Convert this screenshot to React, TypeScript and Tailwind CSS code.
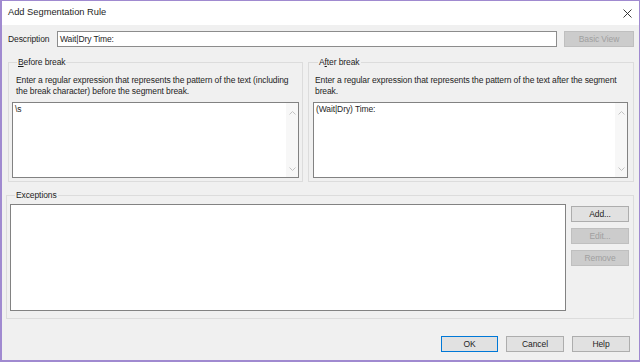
import React from "react";

const font = { fontFamily: '"Liberation Sans", Arial, sans-serif' };

function Chevron({ up }: { up?: boolean }) {
  return (
    <svg width="7" height="4" viewBox="0 0 7 4" className="block">
      <path
        d={up ? "M0.5 3.5 L3.5 0.5 L6.5 3.5" : "M0.5 0.5 L3.5 3.5 L6.5 0.5"}
        fill="none"
        stroke="#c2c2c2"
        strokeWidth="1"
      />
    </svg>
  );
}

function TextArea({ value }: { value: string }) {
  return (
    <div className="flex h-[76px] border border-[#828282] bg-white">
      <div className="flex-1 pl-[2px] pt-[1px] leading-[11px]">{value}</div>
      <div className="flex w-[12px] flex-col items-center justify-between bg-[#f7f7f7] pt-[8px] pb-[6px]">
        <Chevron up />
        <Chevron />
      </div>
    </div>
  );
}

function Btn({
  children,
  disabled,
  primary,
  className = "",
}: {
  children: React.ReactNode;
  disabled?: boolean;
  primary?: boolean;
  className?: string;
}) {
  const cls = disabled
    ? "bg-[#cccccc] border-[#bfbfbf] text-[#a0a0a0]"
    : primary
    ? "bg-[#e1e1e1] border-[#0078d7] text-[#1e1e1e]"
    : "bg-[#e1e1e1] border-[#adadad] text-[#1e1e1e]";
  return (
    <div
      className={`flex h-[16px] items-center justify-center border ${cls} ${className}`}
    >
      {children}
    </div>
  );
}

export default function App() {
  return (
    <div
      style={font}
      className="flex h-[362px] w-[640px] flex-col border-t border-r border-b-2 border-l-2 border-[#a08ad0] bg-[#f0f0f0] text-[8.5px] tracking-[-0.1px] text-[#1e1e1e]"
    >
      {/* title bar */}
      <div className="flex h-[24px] shrink-0 items-center justify-between bg-white pl-[6px] pr-[7px]">
        <span className="text-[9.3px] tracking-normal text-[#1e1e1e]">
          Add Segmentation Rule
        </span>
        <svg width="9" height="9" viewBox="0 0 9 9">
          <path d="M0.5 0.5 L8.5 8.5 M8.5 0.5 L0.5 8.5" stroke="#222" strokeWidth="0.9" />
        </svg>
      </div>

      {/* body */}
      <div className="flex flex-1 flex-col pl-[4px] pr-[5px] pt-[6px]">
        {/* description row */}
        <div className="flex h-[16px] items-center pl-[2px]">
          <span className="w-[49px] shrink-0">Description</span>
          <div className="flex h-[16px] flex-1 items-center border border-[#8c8c8c] bg-white pl-[2px]">
            Wait|Dry Time:
          </div>
          <Btn disabled className="ml-[7px] w-[70px]">
            Basic View
          </Btn>
        </div>

        {/* before / after groups */}
        <div className="mt-[10px] flex gap-[5px] pl-[2px]">
          <fieldset className="w-[295px] border border-[#dcdcdc] px-[3px] pb-[3px]">
            <legend className="ml-[5px] px-[1px] leading-[11px]">
              <span className="underline">B</span>efore break
            </legend>
            <div className="mt-[7px] pl-[4px] leading-[10.5px]">
              Enter a regular expression that represents the pattern of the text (including
              <br />
              the break character) before the segment break.
            </div>
            <div className="mt-[6px]">
              <TextArea value="\s" />
            </div>
          </fieldset>
          <fieldset className="flex-1 border border-[#dcdcdc] pl-[4px] pr-[5px] pb-[3px]">
            <legend className="ml-[5px] px-[1px] leading-[11px]">
              A<span className="underline">f</span>ter break
            </legend>
            <div className="mt-[7px] pl-[2px] leading-[10.5px]">
              Enter a regular expression that represents the pattern of the text after the segment
              <br />
              break.
            </div>
            <div className="mt-[6px]">
              <TextArea value="(Wait|Dry) Time:" />
            </div>
          </fieldset>
        </div>

        {/* exceptions */}
        <fieldset className="mt-[8px] border border-[#dcdcdc] pl-[3px] pr-[4px] pb-[7px]">
          <legend className="ml-[5px] px-[1px] leading-[11px]">Exceptions</legend>
          <div className="mt-[3px] flex gap-[5px]">
            <div className="h-[107px] flex-1 border border-[#828282] bg-white" />
            <div className="flex w-[58px] flex-col gap-[6px] pt-[2px]">
              <Btn>Add...</Btn>
              <Btn disabled>Edit...</Btn>
              <Btn disabled>Remove</Btn>
            </div>
          </div>
        </fieldset>

        {/* footer */}
        <div className="mt-[17px] flex justify-end gap-[8px] pr-[4px]">
          <Btn primary className="w-[57px]">
            OK
          </Btn>
          <Btn className="w-[58px]">Cancel</Btn>
          <Btn className="w-[58px]">Help</Btn>
        </div>
      </div>
    </div>
  );
}
